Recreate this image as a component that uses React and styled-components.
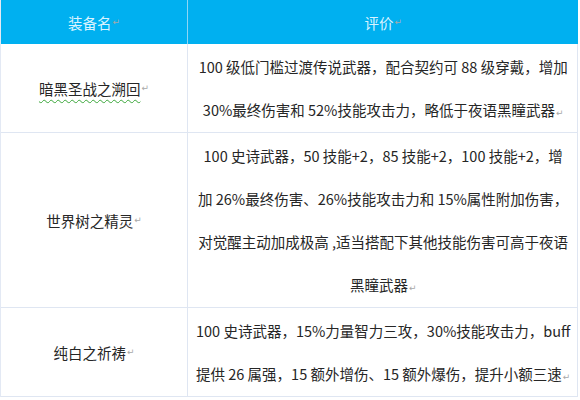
import React from "react";
import styled, { createGlobalStyle } from "styled-components";

const Global = createGlobalStyle`
  html, body { margin: 0; padding: 0; background: #ffffff; }
  body { font-family: "Noto Sans CJK SC", "Noto Sans", sans-serif; }
`;

const Table = styled.div`
  width: 578px;
  display: grid;
  grid-template-columns: 187px 1fr;
  border-left: 1px solid #e3e9f4;
  border-right: 1px solid #dfe6f2;
  border-bottom: 1px solid #dfe6f2;
  box-sizing: border-box;
`;

const HeadCell = styled.div`
  height: 44px;
  background: #00b0f0;
  color: #d9f3ff;
  font-size: 14.5px;
  font-weight: 400;
  display: flex;
  align-items: center;
  justify-content: center;
  border-right: ${(p) => (p.$last ? "none" : "1px solid #8fd6f5")};
  box-sizing: border-box;
`;

const NameCell = styled.div`
  display: flex;
  align-items: center;
  justify-content: center;
  border-right: 1px solid #dfe6f2;
  border-bottom: ${(p) => (p.$last ? "none" : "1px solid #dfe6f2")};
  color: #262626;
  font-size: 14.5px;
  box-sizing: border-box;
`;

const NameText = styled.span`
  text-decoration: ${(p) => (p.$wavy ? "underline wavy #3aa63a" : "none")};
  text-decoration-thickness: 1px;
  text-underline-offset: 4px;
`;

const DescCell = styled.div`
  padding: 1px 8px 1px;
  border-bottom: ${(p) => (p.$last ? "none" : "1px solid #dfe6f2")};
  color: #262626;
  font-size: 14.5px;
  line-height: 43px;
  text-align: center;
  box-sizing: border-box;
`;

const Line = styled.div`
  white-space: nowrap;
  height: 43px;
`;

const Mark = styled.span`
  color: #a8a8a8;
  font-family: "DejaVu Sans", sans-serif;
  font-size: 9px;
  line-height: 0;
  margin-left: 1px;
`;

const rows = [
  {
    name: "暗黑圣战之溯回",
    wavy: true,
    lines: [
      "100 级低门槛过渡传说武器，配合契约可 88 级穿戴，增加",
      "30%最终伤害和 52%技能攻击力，略低于夜语黑瞳武器",
    ],
  },
  {
    name: "世界树之精灵",
    lines: [
      "100 史诗武器，50 技能+2，85 技能+2，100 技能+2，增",
      "加 26%最终伤害、26%技能攻击力和 15%属性附加伤害，",
      "对觉醒主动加成极高 ,适当搭配下其他技能伤害可高于夜语",
      "黑瞳武器",
    ],
  },
  {
    name: "纯白之祈祷",
    lines: [
      "100 史诗武器，15%力量智力三攻，30%技能攻击力，buff",
      "提供 26 属强，15 额外增伤、15 额外爆伤，提升小额三速",
    ],
  },
];

export default function App() {
  return (
    <>
      <Global />
      <Table>
        <HeadCell>
          装备名<Mark>↵</Mark>
        </HeadCell>
        <HeadCell $last>
          评价<Mark>↵</Mark>
        </HeadCell>
        {rows.map((r, i) => {
          const last = i === rows.length - 1;
          return (
            <React.Fragment key={r.name}>
              <NameCell $last={last}>
                <NameText $wavy={r.wavy}>{r.name}</NameText>
                <Mark>↵</Mark>
              </NameCell>
              <DescCell $last={last}>
                {r.lines.map((l, j) => (
                  <Line key={j}>
                    {l}
                    {j === r.lines.length - 1 && <Mark>↵</Mark>}
                  </Line>
                ))}
              </DescCell>
            </React.Fragment>
          );
        })}
      </Table>
    </>
  );
}
